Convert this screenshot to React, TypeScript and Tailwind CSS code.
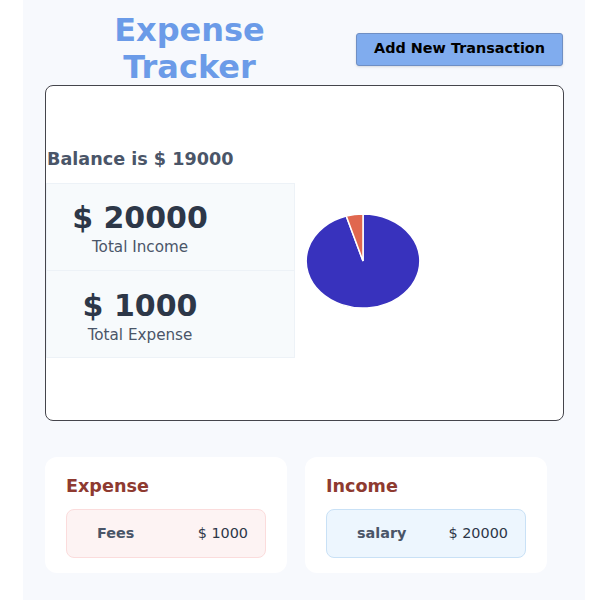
import React from "react"

type Tx = { label: string; amount: number }

const expenses: Tx[] = [{ label: "Fees", amount: 1000 }]
const incomes: Tx[] = [{ label: "salary", amount: 20000 }]

function Pie() {
  // 1000 of 21000 -> orange slice, counter-clockwise from the top
  return (
    <svg width="116" height="96" viewBox="0 0 100 100" preserveAspectRatio="none">
      <path
        d="M50,50 L50,1 A49,49 0 1,1 35.56,3.18 Z"
        fill="#3832bd"
        stroke="#ffffff"
        strokeWidth="1.5"
        vectorEffect="non-scaling-stroke"
      />
      <path
        d="M50,50 L35.56,3.18 A49,49 0 0,1 50,1 Z"
        fill="#e0674f"
        stroke="#ffffff"
        strokeWidth="1.5"
        vectorEffect="non-scaling-stroke"
      />
    </svg>
  )
}

function StatBox({ value, label, first }: { value: number; label: string; first?: boolean }) {
  return (
    <div
      className={
        first
          ? "flex flex-col items-center border border-[#edf2f7] bg-[#f7fafc] pt-[17px] pr-[61px] pb-[13px]"
          : "flex flex-col items-center border border-t-0 border-[#edf2f7] bg-[#f7fafc] pt-[18px] pr-[61px] pb-[12px]"
      }
    >
      <span className="text-[30px] leading-[34px] font-bold text-[#2d3748]">$ {value}</span>
      <span className="mt-[2px] text-[15.2px] leading-[20px] text-[#4a5568]">{label}</span>
    </div>
  )
}

function TxCard({ title, items, kind }: { title: string; items: Tx[]; kind: "expense" | "income" }) {
  return (
    <div className="w-[242px] rounded-xl bg-white px-[21px] pt-4 pb-[15px]">
      <h3 className="text-[17.6px] leading-[26px] font-bold text-[#8e3a30]">{title}</h3>
      <div className="mt-[10px] flex flex-col gap-2">
        {items.map((t) => (
          <div
            key={t.label}
            className={
              kind === "expense"
                ? "flex h-[49px] items-center justify-between rounded-lg border border-[#fbdcdc] bg-[#fdf3f3] pl-[30px] pr-[17px]"
                : "flex h-[49px] items-center justify-between rounded-lg border border-[#c9e1f6] bg-[#edf6fe] pl-[30px] pr-[17px]"
            }
          >
            <span className="text-[14.4px] font-bold text-[#4a5568]">{t.label}</span>
            <span className="text-[14.4px] text-[#2d3748]">$ {t.amount}</span>
          </div>
        ))}
      </div>
    </div>
  )
}

export default function App() {
  const income = incomes.reduce((s, t) => s + t.amount, 0)
  const expense = expenses.reduce((s, t) => s + t.amount, 0)

  return (
    <div className="min-h-[600px] bg-white font-['DejaVu_Sans',sans-serif]">
      <div className="ml-[23px] min-h-[600px] w-[562px] bg-[#f7f9fd] px-[22px] pt-[12px] pb-6">
        {/* Header */}
        <div className="-mb-px flex items-center gap-[22px]">
          <h1 className="flex-1 text-center text-[32px] leading-[37px] font-bold text-[#6b9be8]">
            Expense Tracker
          </h1>
          <button className="h-[33px] w-[207px] rounded-[3px] border border-[#6f8fc4] bg-[#80acee] text-[14.4px] font-bold text-black shadow-sm">
            Add New Transaction
          </button>
        </div>

        {/* Summary card */}
        <div className="flex h-[336px] w-[519px] items-center rounded-lg border border-[#45454c] bg-white">
          <div className="mt-[60px] flex w-[249px] flex-col self-start">
            <p className="pl-[1px] text-[17.6px] leading-[26px] font-bold text-[#4a5568]">
              Balance is $ {income - expense}
            </p>
            <div className="mt-[11px]">
              <StatBox value={income} label="Total Income" first />
              <StatBox value={expense} label="Total Expense" />
            </div>
          </div>
          <div className="ml-[10px] mt-[15px]">
            <Pie />
          </div>
        </div>

        {/* Transactions */}
        <div className="mt-[36px] flex gap-[18px]">
          <TxCard title="Expense" items={expenses} kind="expense" />
          <TxCard title="Income" items={incomes} kind="income" />
        </div>
      </div>
    </div>
  )
}
